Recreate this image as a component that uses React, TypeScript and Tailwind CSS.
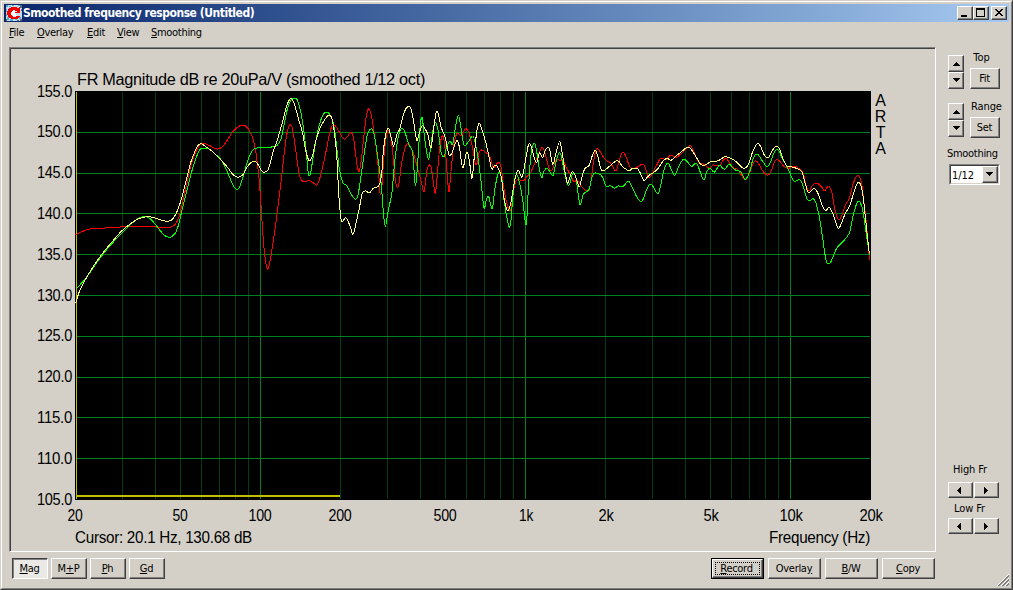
import React from 'react';

const redTrace =
  '75.5,235 81.7,231.7 90,229 105,228 120,227 131.7,226.5 153,226.5 158,227.5 170,227.3 175,224.5 178.5,218.3 181.5,207 186.5,185 191.7,162.5 196.7,150 200.7,144.3 204,143.5 209,145.3 216.7,149 221.7,147.3 226.7,141 231.7,133.3 236.7,127.7 241.7,125.3 246,126.3 250,131.7 253.3,140 256,153.3 258.7,175 260.7,200 262.7,231.7 264.7,255 267.3,269 269.3,265 272.7,245 276.7,216.7 280.7,185 284,155 286.7,135 290,124.3 292.7,130 296,151.7 298.7,171.7 301.7,180.3 305,181.7 308.3,180.7 312.7,182.3 316.7,185 319.3,180 322.7,166.7 326.7,148.3 330,131.7 333.3,124.7 336.7,127.7 340,133.3 344,139.3 347.3,136.7 350.7,132.7 353.3,136.7 355.3,151.7 357.3,166.7 359.3,171 361.3,160 363.3,141.7 366,118.3 368.3,109 371.3,115 374,131.7 376.7,151.7 378.7,173.3 380,193.3 381.7,188.3 383.3,165 385.3,143.3 387.3,131.7 389.3,131.7 391.3,140 393.3,158.3 395.3,180 397.3,187.7 399.3,181.7 401.3,165 404,151.7 407.3,143.3 410,145.7 413.3,153.3 416.7,165 419.3,175 421.3,181.7 424,191.7 426.7,171.7 429.3,165 431.3,168.3 433.3,181.7 435.3,193.3 437.3,175 439.3,151.7 441.7,136.7 444,140 446,158.3 448,185 449,191.7 451,171.7 453.3,148.3 456.7,134 461.7,135.5 464,131 466,128.3 469.3,134 472.7,148.3 475.3,163.3 477,163.5 479.3,151.7 482.7,150.3 486.7,153.3 490,156.7 493.3,167.7 496,165 498.7,162.3 501.3,168.3 503.3,185 506,200 508.7,209 511.3,208.3 513.3,191.7 516,181 518.3,179.7 524,180.7 526.7,176.7 530.7,172.3 534,165 538.3,155 542,147.3 544.7,151.7 548,165 551.3,171 554,165 556.7,159 560,161 562.7,160 566,166.7 570,174.3 574,181.7 577.3,180 581.7,186.7 587.7,191 590.7,183 593.3,163 595.3,152.5 597.3,148.3 600.7,152.7 605,159.3 610.7,163.3 616,171 619.3,160 622.7,152 626,156.7 630,167.3 636,167.7 642.7,164 645.3,167.3 647.3,175 650,177.3 653.3,171.7 656.7,165 660.7,158.3 666,159.3 670.7,155.3 676,157.3 681.7,153.3 690,145.7 694,151.7 698.3,161.7 703.3,164 709.3,168.3 713.3,165 719.3,165.7 724,159.3 726.7,158.8 732.7,167.3 738.3,170 745,180 749.3,173.3 753.3,163.3 756,160.7 759.3,165 764,172.7 768.3,175 771.7,170 775,160.7 779.3,160.7 783.3,166 788.3,168.3 794,166 800,169.3 803.3,173.3 806,185 808.7,191 812.7,185 817.3,183.3 821.7,187.3 824.7,190.7 828.7,186 832,193.3 835,210 838.7,220 842,215 845.3,205 849.3,198.3 853.3,183.3 858,175.3 861.3,181.7 863.3,196.7 866,220 868,243 869.5,260';

const greenTrace =
  '76.5,288.5 86,278 96.5,263 108,248 120,235 131.7,223.5 138,218.5 145,216.5 150,218.5 155,224 160,230.5 165,235.7 170,237.3 175,233.5 178.5,225 181.7,211.5 186.7,191.5 190.7,175 195,161 199.5,150 203,148.3 209,149 215,154 220,158.3 225,166.7 230,178.3 234,186.7 237.7,189.3 240.7,184.3 244,173.3 247.3,161.7 250.7,153.3 254.3,149 260,147.5 275,146.5 279.3,142.7 281.7,136.7 284,125 286.7,111.7 290,101.7 293.3,98.3 297.3,100 301,113.3 304,131.7 306.7,156.7 308.3,173.3 310.3,174.3 312.7,160 316,140 319.3,125 323.3,114.3 327.3,112.3 330.7,115.7 334,126.7 337.3,152 339.3,168.3 342.7,182.3 346.7,185.7 350.7,193.3 355.3,199.3 358,195 360.7,178.3 364,155 367.3,135 370.7,129 373.3,131.7 376,145 379.3,168.3 381.3,185 383.3,211.7 385.3,226.7 388,211.7 392,191.7 394.7,161.7 398,138.3 401.3,128.3 404.7,131.7 408.7,144.3 412.7,153.3 415.3,185 417.3,168.3 420,128.3 422,117.3 424.7,138.3 428.3,159 431,145 433.3,128.3 435.7,122.3 438.3,131.7 441,151.7 444,156.7 446.7,146.7 450,141 452.7,144.3 455.3,128.3 458.3,115 461,128.3 464,145 468.3,141.7 472.7,136 475.3,143.3 478,158.3 480.7,178.3 484,207.7 486.7,198.3 488.7,196.7 492.3,208.3 495,188.3 498.3,173.3 501.7,178.3 504.3,201.7 509,226.7 511,220 512.7,198.3 514.7,180 516.7,174.3 519.3,181.7 522.7,200 526.3,225 528,195 530,165 532,148.3 534.7,143.3 536.7,151.7 539.3,168.3 541.7,177.7 544,171 547.3,168.3 550.7,173.3 553.3,175 556,161.7 560,152.7 563.3,166.7 566.7,181.7 569.3,185 572.7,173.3 576,178.3 578.3,195 580,205 583.3,194.3 589.3,189 591.7,178.3 594,173.3 599.3,174 602.7,177.3 606,186 610.7,185.7 614.3,188.3 618.3,186 622.7,186.7 628.7,181.3 632.7,188.3 637.3,197.7 642,201.3 646,191 650,184.3 653.3,186.7 658,193.7 660.7,185 664,170 667.7,163 671.3,169.3 674.7,175.3 678.7,166.7 683.3,159.3 687.3,161.7 691.7,166.3 696.7,163.3 700.7,173.3 704,180 706.7,171.7 710,168.3 714.3,172.3 719.3,165.3 724.3,169.3 729.3,164.3 732.7,167.7 736.7,170.7 740.7,171.7 745,179.3 749.3,172.7 753.3,158.3 757.3,154 761.7,160 767.3,166.7 770.7,161.7 774.3,152 778.3,150 781.7,157.3 786,165 790,173.3 794,181.3 800,179.7 803.3,186.7 806.7,198.3 810,200.7 813.3,198.7 816,203.3 819.3,216.7 822.7,238.3 826,260 828.7,264 831.3,261 836.7,248.3 849.3,233.3 853.3,215 857.3,202.3 860,202.3 862.7,210 866.7,236.7 869.7,255';

const yellowTrace =
  '75.5,303.5 80,290 90,271.7 100,256.7 111.7,242.3 121.7,231 133.3,221.7 140,218.3 148,216.7 155,218 161.7,220.3 168.3,221.3 172.7,219 176.7,212.3 181.7,198.3 186.7,178.3 190.7,162.5 194.7,152 198.3,145 201.7,144 206.7,147.3 213.3,152.3 220,159 228.3,168.3 233.3,175 238.3,177.3 243.3,174.3 246.7,167.7 250.7,162.7 255,161.3 258.3,165 261,170 264.3,172.3 268.3,169.3 272.7,153.3 277.3,140 281.7,125 286,108.3 289.3,100 292,99 294.7,105 298.3,118.3 302.7,133.3 306,151.7 309.3,160.7 312.7,155 316,140 320,128.3 325,119.3 329,115 331.7,118.3 334.3,131.7 336.7,155 338.8,195 340.7,216.7 342.3,221.7 345.3,217.7 348,221 350.7,228.3 353,234.3 356,223.3 359.3,208.3 362.3,193.3 366,191 369.3,193 373.3,188.3 379.3,185 381.7,173.3 383.3,151.7 386,133.3 388.7,128.3 391.3,138.3 393.7,146 396.7,135 400,128.3 403.3,115 406.7,107.7 410.7,108.3 413.3,120 416.7,140 418.7,135 422,125.7 424.7,128.3 428,135 431,147.7 433.7,128.3 436.3,111.7 439,116.7 441,126.7 445,136.7 449,155 452,152.7 456.7,140.7 459.3,146.7 462.7,167.7 466.7,152.3 469.3,160 472,178.3 474.7,151.7 476.7,131.7 479.3,123.3 482,130 486,143.3 489.3,158.3 491.7,169 495,165 498.3,168.3 501.3,176.7 504,198.3 507.7,210.7 510.7,203.3 513.3,188.3 516,175 518.3,170.3 522,177 524.7,165 526.7,153.3 528.7,144.3 531.3,146.7 534,156.7 536.7,162.3 539.3,153 542.7,157.7 545.3,150 549.3,148.3 552.7,164.3 556,153.3 559.7,141.7 562.3,153.3 565,171.7 567.7,183.3 570,176.7 572.3,171.7 575.3,175.7 579.3,186.7 582,176.7 584.7,169 589.3,165 592,156.5 595.3,150.3 598,157.3 600.7,168.3 602.7,171 608.3,167.3 614,162.3 618,160.7 622.7,166.7 629.3,170.7 632.7,168.3 637.7,168.7 640.7,174 644,180.7 648.3,176 653.3,172.7 658.3,168.3 661.7,162.7 666.7,158.3 671,160.3 677.3,155 682.7,150.7 687.7,147 691.7,150 696,156.7 700.7,164.3 705,165 710.7,161.7 718.3,160.7 725,156.7 732.7,159.3 737.3,162.7 741.7,167.3 745.3,168 748.7,164 752.7,151.7 757.3,143.7 760.7,146.7 764.3,155 768.3,157.7 772.3,150.7 776,146.3 779.3,148.3 782.7,158.3 786.7,165.7 793.3,167.3 801.7,171.7 804.7,181.7 808.3,192.7 811.7,190 815,189 818.7,195 822,205 825.7,210.7 829,207.3 832.7,213.3 836,223.3 838.7,228.3 842,221.7 845.3,213.3 850,205 854,191.7 858.3,182.3 861,186 863.3,198.3 866,223.3 869.3,253.3';

// Catmull-Rom spline through the measured points
function toPath(trace: string) {
  const p = trace.split(' ').map((s) => s.split(',').map(Number));
  let d = `M${p[0][0]} ${p[0][1]}`;
  for (let i = 0; i < p.length - 1; i++) {
    const a = p[Math.max(i - 1, 0)];
    const b = p[i];
    const c = p[i + 1];
    const e = p[Math.min(i + 2, p.length - 1)];
    const h = (c[0] - b[0]) / 3;
    const m1 = (c[1] - a[1]) / (c[0] - a[0]);
    const m2 = (e[1] - b[1]) / (e[0] - b[0]);
    d += `C${b[0] + h} ${b[1] + m1 * h} ${c[0] - h} ${c[1] - m2 * h} ${c[0]} ${c[1]}`;
  }
  return d;
}

const freqX = (f: number) => Math.floor(75.5 + 265 * Math.log10(f / 20));

const minorFreqs = [30, 40, 50, 60, 70, 80, 90, 200, 300, 400, 500, 600, 700, 800, 900, 2000, 3000, 4000, 5000, 6000, 7000, 8000, 9000];
const majorFreqs = [100, 1000, 10000];
const majorRows = [132, 173, 213, 254, 295, 336, 377, 417, 458];

const levels = ['155.0', '150.0', '145.0', '140.0', '135.0', '130.0', '125.0', '120.0', '115.0', '110.0', '105.0'];

const freqLabels = [
  { text: '20', x: 75, w: 15 },
  { text: '50', x: 180, w: 15 },
  { text: '100', x: 260, w: 23 },
  { text: '200', x: 340, w: 23 },
  { text: '500', x: 445, w: 23 },
  { text: '1k', x: 526, w: 14 },
  { text: '2k', x: 606, w: 15 },
  { text: '5k', x: 711, w: 15 },
  { text: '10k', x: 791, w: 23 },
  { text: '20k', x: 871, w: 23 },
];

const raised =
  'border border-t-white border-l-white border-r-[#404040] border-b-[#404040] bg-[#d4d0c8] shadow-[inset_-1px_-1px_0_#808080]';

function Label({ x, y, width, children }: { x: number; y: number; width: number; children: string }) {
  return (
    <text x={x} y={y} textLength={width} lengthAdjust="spacingAndGlyphs">{children}</text>
  );
}

function ResponseChart() {
  return (
    <svg width="924" height="502" viewBox="11 49 924 502" className="block" fontFamily="'Liberation Sans', Arial, sans-serif" fontSize="16">
      <rect x="75" y="91" width="796" height="409" fill="#000" />
      <g shapeRendering="crispEdges">
        {minorFreqs.map((f) => (
          <rect key={f} x={freqX(f)} y="92" width="1" height="407" fill="#004010" />
        ))}
        {majorRows.map((y) => (
          <rect key={y} x="76" y={y} width="794" height="1" fill="#008020" />
        ))}
        {majorFreqs.map((f) => (
          <rect key={f} x={freqX(f)} y="92" width="1" height="407" fill="#008020" />
        ))}
        <rect x="76" y="92" width="1" height="407" fill="#c0c000" />
        <rect x="76" y="495" width="264" height="2" fill="#c0c000" />
      </g>
      <g fill="none" strokeWidth="1" shapeRendering="crispEdges">
        <path d={toPath(redTrace)} stroke="#ff0000" />
        <path d={toPath(greenTrace)} stroke="#00ff00" />
        <path d={toPath(yellowTrace)} stroke="#ffff80" />
      </g>
      <Label x={77} y={85} width={348}>FR Magnitude dB re 20uPa/V (smoothed 1/12 oct)</Label>
      {levels.map((level, i) => (
        <Label key={level} x={37} y={Math.floor(97 + i * 40.8)} width={35}>{level}</Label>
      ))}
      {freqLabels.map((label) => (
        <Label key={label.text} x={label.x - label.w / 2} y={521} width={label.w}>{label.text}</Label>
      ))}
      <Label x={75} y={543} width={177}>Cursor: 20.1 Hz, 130.68 dB</Label>
      <Label x={769} y={543} width={101}>Frequency (Hz)</Label>
      {['A', 'R', 'T', 'A'].map((c, i) => (
        <text key={i} x="880.5" y={106 + i * 16} textAnchor="middle">{c}</text>
      ))}
    </svg>
  );
}

type Direction = 'up' | 'down' | 'left' | 'right';

const arrows: Record<Direction, string> = {
  up: 'M3 0h1v1H3zM2 1h3v1H2zM1 2h5v1H1zM0 3h7v1H0z',
  down: 'M0 0h7v1H0zM1 1h5v1H1zM2 2h3v1H2zM3 3h1v1H3z',
  left: 'M3 0h1v7H3zM2 1h1v5H2zM1 2h1v3H1zM0 3h1v1H0z',
  right: 'M0 0h1v7H0zM1 1h1v5H1zM2 2h1v3H2zM3 3h1v1H3z',
};

function Arrow({ dir }: { dir: Direction }) {
  const vertical = dir === 'up' || dir === 'down';
  return (
    <svg width={vertical ? 7 : 4} height={vertical ? 4 : 7} shapeRendering="crispEdges">
      <path d={arrows[dir]} />
    </svg>
  );
}

function Spinner() {
  return (
    <div className="flex w-4 flex-col">
      <button className={`${raised} flex h-[17px] items-center justify-center`}><Arrow dir="up" /></button>
      <button className={`${raised} flex h-[17px] items-center justify-center pb-px`}><Arrow dir="down" /></button>
    </div>
  );
}

function Scroller() {
  return (
    <div className="flex gap-px">
      <button className={`${raised} flex h-4 w-[25px] items-center justify-center pr-1`}><Arrow dir="left" /></button>
      <button className={`${raised} flex h-4 w-[25px] items-center justify-center pr-0.5`}><Arrow dir="right" /></button>
    </div>
  );
}

function ToolButton({ className = '', children }: { className?: string; children: React.ReactNode }) {
  return <button className={`${raised} flex h-[21px] items-center justify-center pr-px ${className}`}>{children}</button>;
}

export default function App() {
  return (
    <div className="flex h-[590px] w-[1013px] flex-col overflow-hidden border border-t-[#d4d0c8] border-l-[#d4d0c8] border-r-[#404040] border-b-[#404040] bg-[#d4d0c8] font-['DejaVu_Sans_Condensed',Tahoma,sans-serif] text-[11px] leading-[13px] tracking-[-0.3px] text-black">
      <div className="flex min-h-0 flex-1 flex-col border border-t-white border-l-white border-r-[#808080] border-b-[#808080] pt-0.5 pl-0.5">
        {/* Title bar */}
        <div className="mr-0.5 flex h-[18px] shrink-0 items-center bg-linear-to-r from-[#0a246a] to-[#a6caf0] pr-0.5 pl-0.5">
          <svg width="16" height="16" viewBox="0 0 16 16" shapeRendering="crispEdges">
            <path fill="#c8dce8" d="M0 0h16v16H0z" />
            <path fill="#48b0d0" d="M0 0h2v2H0zM3 1h2v1H3zM6 0h2v1H6zM12 0h2v1h-2zM0 4h1v3H0zM0 9h1v2H0zM1 12h2v3H1zM4 14h3v2H4zM9 14h2v1H9zM13 12h2v2h-2z" />
            <path fill="#506878" d="M14 0h2v3h-2zM15 4h1v2h-1zM0 14h1v2H0zM14 14h2v2h-2zM11 15h2v1h-2z" />
            <path fill="#f00000" d="M5 2h6v1h2V2h1v6H9V7h2V6H9V5H7v1H6v1H5v3h1v1h1v1h3v-1h4v1h-1v1h-1v1H5v-1H3v-1H2v-2H1V6h1V4h1V3h2z" />
            <path fill="#fff" d="M7 5h2v1H7zM6 6h3v2H6zM5 8h5v2H5zM7 10h4v1H7z" />
          </svg>
          <span className="ml-px flex-1 text-[12px] font-bold tracking-[-0.47px] whitespace-nowrap text-white">
            Smoothed frequency response (Untitled)
          </span>
          <button className={`${raised} h-3.5 w-4`}>
            <svg width="14" height="12" className="block" shapeRendering="crispEdges"><path d="M3 8h6v2H3z" /></svg>
          </button>
          <button className={`${raised} h-3.5 w-4`}>
            <svg width="14" height="12" className="block" shapeRendering="crispEdges"><path fillRule="evenodd" d="M2 1h9v9H2zM3 3v6h7V3z" /></svg>
          </button>
          <button className={`${raised} ml-0.5 h-3.5 w-4`}>
            <svg width="14" height="12" className="block" shapeRendering="crispEdges">
              <path d="M3 2h2v1H3zM9 2h2v1H9zM4 3h2v1H4zM8 3h2v1H8zM5 4h4v1H5zM6 5h2v1H6zM5 6h4v1H5zM4 7h2v1H4zM8 7h2v1H8zM3 8h2v1H3zM9 8h2v1H9z" />
            </svg>
          </button>
        </div>

        {/* Menu */}
        <div className="flex h-5 shrink-0 items-center gap-3 pl-[5px] [&_u]:underline-offset-1">
          <span className="w-4"><u>F</u>ile</span>
          <span className="w-[38px]"><u>O</u>verlay</span>
          <span className="w-[18px]"><u>E</u>dit</span>
          <span className="w-[22px]"><u>V</u>iew</span>
          <span><u>S</u>moothing</span>
        </div>

        <div className="flex flex-1">
          <div className="flex w-[932px] flex-col pt-[5px] pl-[5px]">
            {/* Graph panel */}
            <div className="h-[505px] w-[927px] shrink-0 border border-t-[#808080] border-l-[#808080] border-r-white border-b-white">
              <div className="border-t border-l border-[#404040]">
                <ResponseChart />
              </div>
            </div>

            {/* Graph buttons */}
            <div className="mt-1.5 flex justify-between pr-px pl-[3px] [&_u]:underline-offset-1">
              <div className="flex gap-[3px]">
                <button className="flex h-[21px] w-9 items-center justify-center border border-t-[#404040] border-l-[#404040] border-r-white border-b-white bg-[#ebe9e5] pr-px shadow-[inset_1px_1px_0_#808080]">
                  <span><u>M</u>ag</span>
                </button>
                <ToolButton className="w-9"><span>M<u>+</u>P</span></ToolButton>
                <ToolButton className="w-9"><span><u>P</u>h</span></ToolButton>
                <ToolButton className="w-9"><span><u>G</u>d</span></ToolButton>
              </div>
              <div className="flex gap-1">
                <div className="h-[21px] w-[53px] border border-black">
                  <button className={`${raised} flex h-[19px] w-[51px] p-0.5`}>
                    <span className="flex h-[13px] flex-1 items-center justify-center border border-dotted border-black pr-0.5">
                      <span><u>R</u>ecord</span>
                    </span>
                  </button>
                </div>
                <ToolButton className="w-[53px]"><span>Overla<u>y</u></span></ToolButton>
                <ToolButton className="w-[53px]"><span><u>B</u>/W</span></ToolButton>
                <ToolButton className="w-[53px]"><span><u>C</u>opy</span></ToolButton>
              </div>
            </div>
          </div>

          {/* Axis controls */}
          <div className="flex flex-1 flex-col pt-[9px] pl-3">
            <div className="flex gap-1.5">
              <div className="pt-1"><Spinner /></div>
              <div className="flex w-[30px] flex-col items-center">
                <span className="mr-[7px] tracking-[0px]">Top</span>
                <ToolButton className="mt-1 w-[30px]">Fit</ToolButton>
              </div>
            </div>
            <div className="mt-[11px] flex gap-1.5">
              <div className="pt-[3px]"><Spinner /></div>
              <div className="flex w-[30px] flex-col">
                <span className="ml-px tracking-[-0.1px]">Range</span>
                <ToolButton className="mt-1 w-[30px]">Set</ToolButton>
              </div>
            </div>
            <span className="mt-[9px] -ml-px">Smoothing</span>
            <div className="mt-1 ml-px flex h-[21px] w-[51px] border border-t-[#808080] border-l-[#808080] border-r-white border-b-white">
              <div className="flex flex-1 border border-t-[#404040] border-l-[#404040] border-r-[#d4d0c8] border-b-[#d4d0c8] bg-white">
                <span className="flex flex-1 items-center pt-px pl-px tracking-[-0.1px]">1/12</span>
                <button className={`${raised} flex w-4 items-center justify-center pr-px pb-px`}><Arrow dir="down" /></button>
              </div>
            </div>

            <span className="mt-[278px] ml-[5px] tracking-[-0.15px]">High Fr</span>
            <div className="mt-1.5"><Scroller /></div>
            <span className="mt-1 ml-1.5 tracking-[-0.1px]">Low Fr</span>
            <div className="mt-[3px]"><Scroller /></div>

            <svg width="12" height="12" className="mt-auto mr-0.5 mb-0.5 self-end" shapeRendering="crispEdges">
              <path stroke="#808080" strokeWidth="1.6" d="M1.5 12L12 1.5M5.5 12L12 5.5M9.5 12L12 9.5" />
              <path stroke="#fff" d="M0 12L12 0M4 12l8-8M8 12l4-4" />
            </svg>
          </div>
        </div>
      </div>
    </div>
  );
}
